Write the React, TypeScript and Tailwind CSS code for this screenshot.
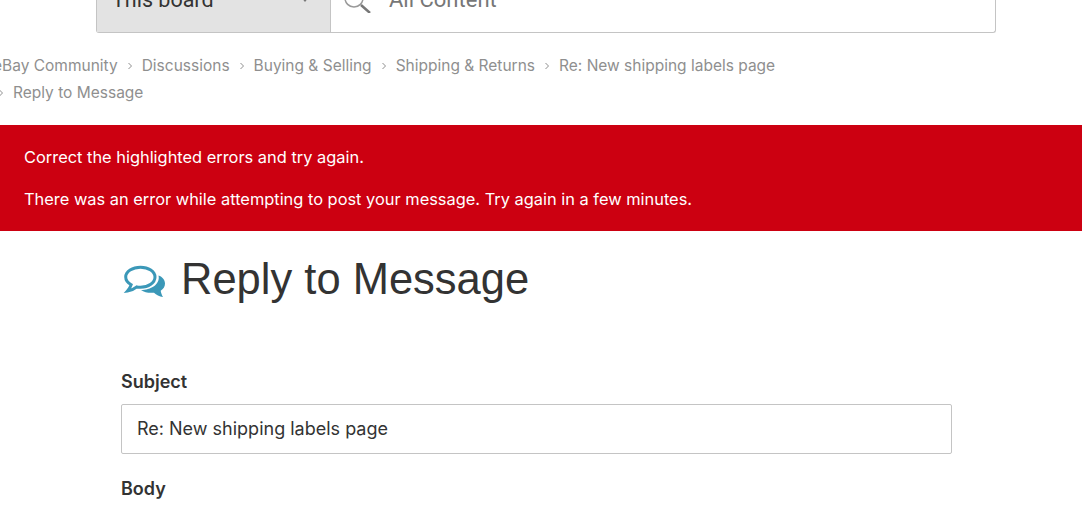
const market = "font-['Inter','Noto_Sans',sans-serif]";

const crumbs = ['eBay Community', 'Discussions', 'Buying & Selling', 'Shipping & Returns', 'Re: New shipping labels page'];

function Chevron() {
  return (
    <svg width="6" height="8" viewBox="0 0 6 8" fill="none" className="flex-none">
      <path d="M1.5 1l3 3-3 3" stroke="#8f8f8f" strokeWidth="1" />
    </svg>
  );
}

function ChatIcon() {
  return (
    <svg width="42" height="34" viewBox="0 0 42 34" className="mt-[5px] flex-none">
      <path
        d="M17.500 2.200c-8 0-14.800 4.300-14.800 9.800 0 3.300 2.300 6 5.500 7.700-.5 1.800-1.700 3.900-3.700 6.200 3.600-.5 7-2 9.300-4 1.200.2 2.400.3 3.700.3 8 0 14.500-4.500 14.500-10.200S25.500 2.200 17.500 2.200z"
        fill="none"
        stroke="#3b98b8"
        strokeWidth="3"
      />
      <path
        d="M35.500 10.500c4 1.500 6.500 4.300 6.500 8 0 3-1.700 5.600-4.300 7.300.3 2 1 4.200 2.300 6.200-3.700-.7-6.700-2.200-9-4.300-4.700.5-9.700-.2-13-2.700 9.500 0 19.500-5.500 17.500-14.500z"
        fill="#3b98b8"
      />
    </svg>
  );
}

export default function App() {
  return (
    <div className="h-[527px] w-[1082px] overflow-hidden bg-white">
      <div className="ml-[96px] flex h-[33px] w-[900px] rounded-b-[3px] border border-t-0 border-[#c4c4c4] font-['Roboto',sans-serif]">
        <div className="flex w-[234px] flex-none items-end justify-between border-r border-[#c4c4c4] bg-[#e3e3e3] pr-[21px] pl-[15px]">
          <span className="mb-[20px] text-[21.500px] leading-[24px] text-[#333]">This board</span>
          <span className="mb-[30px] h-0 w-0 border-x-[4px] border-t-[5px] border-x-transparent border-t-[#777]" />
        </div>
        <div className="flex flex-1 items-end pl-[13px]">
          <svg width="30" height="14" viewBox="0 0 30 14" className="mb-[19px] flex-none" fill="none">
            <circle cx="10" cy="-1" r="9" stroke="#999" strokeWidth="1.500" />
            <path d="M17 6l9 8" stroke="#777" strokeWidth="2.500" />
          </svg>
          <span className="mb-[20px] ml-[15px] text-[22px] leading-[24px] text-[#777]">All Content</span>
        </div>
      </div>

      <div className={`${market} mt-[19px] h-[73px] text-[15.500px] leading-[27px] text-[#8f8f8f]`}>
        <div className="-ml-[7px] flex h-[27px] items-center gap-[9px]">
          {crumbs.map((c, i) => (
            <div key={c} className="flex items-center gap-[9px]">
              {i > 0 && <Chevron />}
              <span>{c}</span>
            </div>
          ))}
        </div>
        <div className="-ml-[2px] flex h-[27px] items-center gap-[9px]">
          <Chevron />
          <span>Reply to Message</span>
        </div>
      </div>

      <div className={`${market} flex h-[106px] flex-col gap-[21px] bg-[#cc0011] px-[24px] pt-[22px] text-[16.400px] leading-[21px] text-white`}>
        <p>Correct the highlighted errors and try again.</p>
        <p>There was an error while attempting to post your message. Try again in a few minutes.</p>
      </div>

      <div className="ml-[121px] w-[831px]">
        <div className="mt-[25px] flex h-[47px] items-center gap-[16px] pl-[2px]">
          <ChatIcon />
          <h1 className="font-['Liberation_Sans',sans-serif] text-[43.500px] leading-[47px] text-[#333]">Reply to Message</h1>
        </div>

        <div className={`${market} mt-[67px] text-[18px] leading-[24px] font-semibold text-[#333]`}>Subject</div>
        <div className={`${market} mt-[10px] flex h-[50px] items-center rounded-[2px] border border-[#c4c4c4] px-[15px] pb-[2px] text-[18px] text-[#333]`}>
          Re: New shipping labels page
        </div>
        <div className={`${market} mt-[23px] text-[18px] leading-[24px] font-semibold text-[#333]`}>Body</div>
      </div>
    </div>
  );
}
